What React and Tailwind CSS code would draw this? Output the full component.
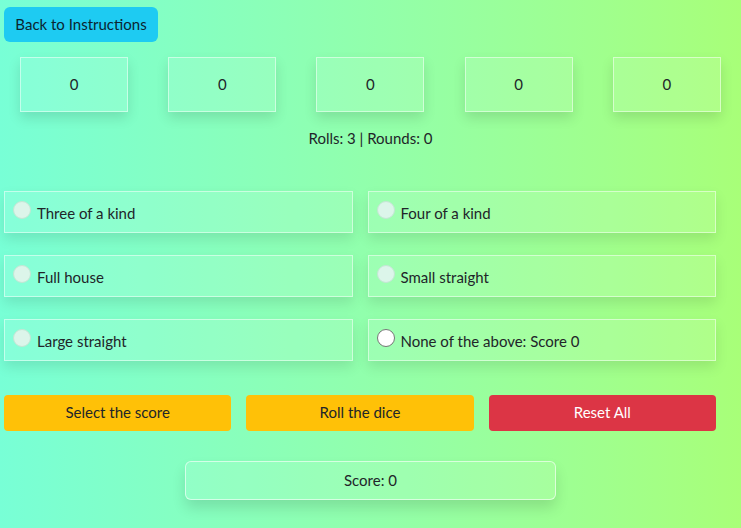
const dice = [0, 0, 0, 0, 0]

const options = [
  { label: 'Three of a kind', disabled: true },
  { label: 'Four of a kind', disabled: true },
  { label: 'Full house', disabled: true },
  { label: 'Small straight', disabled: true },
  { label: 'Large straight', disabled: true },
  { label: 'None of the above: Score 0', disabled: false },
]

function Radio({ disabled }) {
  return disabled ? (
    <span className="mt-[9px] mr-[6px] h-[18px] w-[18px] shrink-0 rounded-full border border-[#c4e6d4] bg-[#dcf5ea]" />
  ) : (
    <span className="mt-[9px] mr-[6px] h-[18px] w-[18px] shrink-0 rounded-full border border-[#767676] bg-white" />
  )
}

export default function App() {
  return (
    <div
      className="min-h-[528px] w-full bg-linear-to-r from-[#78ffd6] to-[#a8ff78] text-[#212529]"
      style={{ fontFamily: 'Lato, "Open Sans", sans-serif' }}
    >
      <div className="pt-[7px] pl-[4px]">
        <button className="h-[35px] w-[154px] rounded-[6px] bg-[#1ecbf2] text-[15px] text-[#0b2530]">
          Back to Instructions
        </button>
      </div>

      <div className="mt-[15px] flex justify-around">
        {dice.map((d, i) => (
          <div
            key={i}
            className="flex h-[55px] w-[108px] items-center justify-center border border-white/50 bg-white/10 text-[15px] shadow-[0_6px_12px_rgba(0,0,0,0.12)]"
          >
            {d}
          </div>
        ))}
      </div>

      <div className="mt-[15px] text-center text-[15px]">Rolls: 3 | Rounds: 0</div>

      <div className="mt-[41px] mr-[25px] ml-[4px] grid grid-cols-2 gap-x-[15px] gap-y-[22px]">
        {options.map((o) => (
          <label
            key={o.label}
            className="flex h-[42px] border border-white/50 bg-white/10 pl-[8px] shadow-[0_6px_12px_rgba(0,0,0,0.1)]"
          >
            <Radio disabled={o.disabled} />
            <span className="pt-[12px] text-[15px] leading-[18px]">{o.label}</span>
          </label>
        ))}
      </div>

      <div className="mt-[34px] mr-[25px] ml-[4px] grid grid-cols-3 gap-[15px]">
        <button className="h-[36px] rounded-[4px] bg-[#ffc107] text-[15px] text-[#212529]">Select the score</button>
        <button className="h-[36px] rounded-[4px] bg-[#ffc107] text-[15px] text-[#212529]">Roll the dice</button>
        <button className="h-[36px] rounded-[4px] bg-[#dc3545] text-[15px] text-white">Reset All</button>
      </div>

      <div className="mt-[30px] flex justify-center">
        <div className="flex h-[39px] w-[371px] items-center justify-center rounded-[6px] border border-white/60 bg-white/10 text-[15px] shadow-[0_8px_14px_rgba(0,0,0,0.12)]">
          Score: 0
        </div>
      </div>
    </div>
  )
}
